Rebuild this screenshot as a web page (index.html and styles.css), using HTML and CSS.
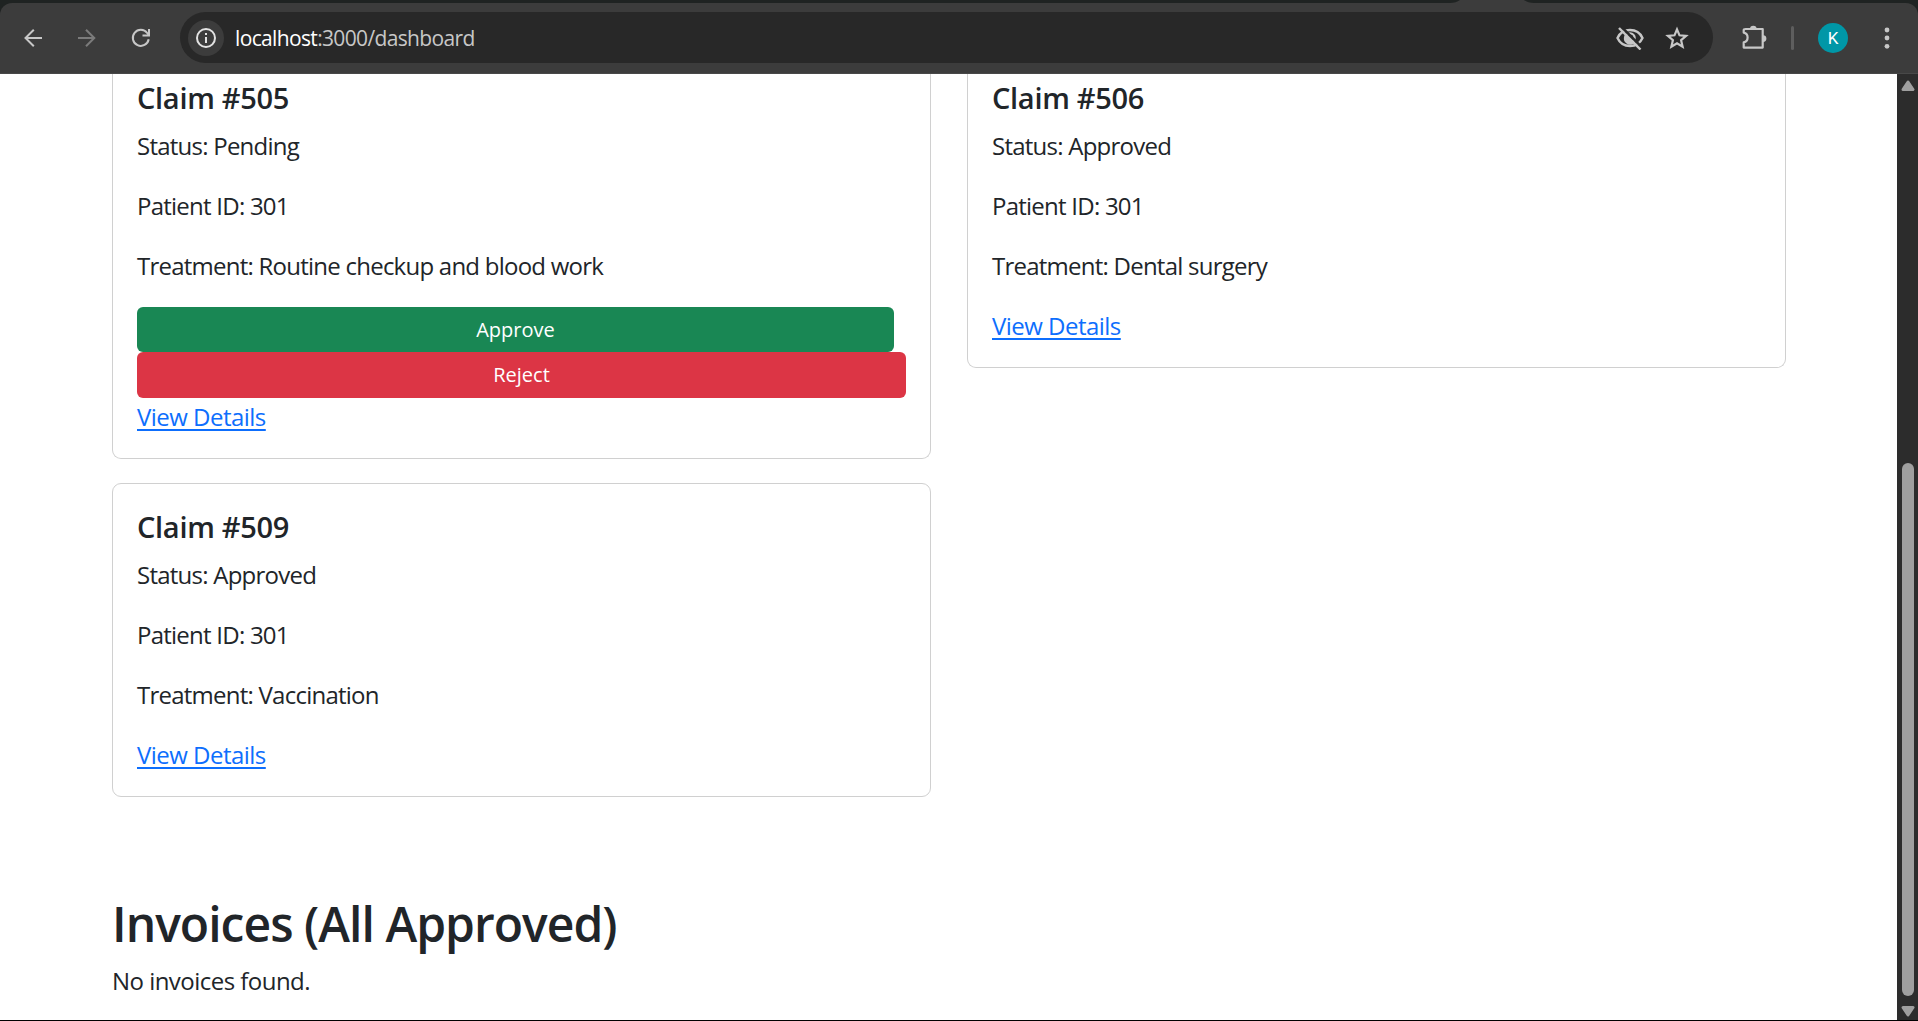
FILE: index.html
```html
<!DOCTYPE html>
<html lang="en">
<head>
<meta charset="utf-8">
<title>Dashboard</title>
<link rel="stylesheet" href="styles.css">
</head>
<body>
<div class="browser">
  <div class="tabstrip"><svg class="tab-foot" width="84" height="3" viewBox="0 0 84 3"><path d="M0 3Q6 3 10 0H74Q78 3 84 3Z" fill="#3c3c3c"/></svg></div>
  <header class="toolbar">
    <nav class="nav-icons">
      <svg width="20" height="20" viewBox="0 0 20 20" fill="none" stroke="#c7c7c7" stroke-width="2"><path d="M19 10H3M10.800 1.700L2.500 10l8.300 8.300"/></svg>
      <svg width="20" height="20" viewBox="0 0 20 20" fill="none" stroke="#7b7b7b" stroke-width="2"><path d="M1 10h15.800M9 1.700l8.300 8.300L9 18.300"/></svg>
      <svg width="20" height="20" viewBox="0 0 20 20" fill="none" stroke="#c7c7c7" stroke-width="2"><path d="M17.700 11.300A8 8 0 1 1 16.200 5L18 7.500"/><path d="M18 1v6.500h-6.500"/></svg>
    </nav>
    <div class="omnibox">
      <span class="site-info"><svg width="20" height="20" viewBox="0 0 20 20"><circle cx="10" cy="10" r="9" fill="none" stroke="#e3e3e3" stroke-width="2"/><path d="M9 9h2v6H9zM9 5h2v2H9z" fill="#e3e3e3"/></svg></span>
      <span class="url"><span class="host">localhost</span>:3000/dashboard</span>
      <svg class="eye" width="28" height="24" viewBox="0 0 28 24" fill="none" stroke="#c7c7c7" stroke-width="2.400"><path d="M1.500 12C4 6.500 8.500 4 14 4s10 2.500 12.500 8C24 17.500 19.500 20 14 20S4 17.500 1.500 12Z"/><circle cx="14" cy="12" r="4.600"/><path d="M9.500 10.500L17 16.500A5 5 0 0 1 9.500 10.500Z" fill="#c7c7c7"/><path d="M5.500 1L26 21.500" stroke="#282828" stroke-width="2.500"/><path d="M3 2L24.500 23.500"/></svg>
      <svg class="star" width="24" height="24" viewBox="0 0 24 24" fill="none" stroke="#c7c7c7" stroke-width="2.200"><path d="M12 3.300l2.500 6 6.600.6-5 4.300 1.500 6.500L12 17.200l-5.600 3.500 1.500-6.500-5-4.300 6.600-.6z"/></svg>
    </div>
    <svg class="puzzle" width="26" height="26" viewBox="0 0 26 26"><path d="M3.700 4h17v18.600h-19v-5.200c5.200-1 5.200-8.800 0-9.800V5q0-1 2-1Z" fill="none" stroke="#c7c7c7" stroke-width="2.200" stroke-linejoin="round"/><path d="M8 4a3.300 3.300 0 0 1 6.600 0ZM21 10.200a3.300 3.300 0 0 1 0 6.800Z" fill="#c7c7c7"/></svg>
    <span class="divider"></span>
    <span class="avatar">K</span>
    <svg class="dots" width="6" height="22" viewBox="0 0 6 22" fill="#c7c7c7"><circle cx="3" cy="3" r="2.400"/><circle cx="3" cy="11" r="2.400"/><circle cx="3" cy="19.300" r="2.400"/></svg>
  </header>
  <div class="viewport">
    <main class="page">
      <section class="claims">
        <article class="card card-clipped">
          <h5>Claim #505</h5>
          <p>Status: Pending</p>
          <p>Patient ID: 301</p>
          <p>Treatment: Routine checkup and blood work</p>
          <button class="btn btn-success">Approve</button>
          <button class="btn btn-danger">Reject</button>
          <a href="#">View Details</a>
        </article>
        <article class="card card-clipped">
          <h5>Claim #506</h5>
          <p>Status: Approved</p>
          <p>Patient ID: 301</p>
          <p>Treatment: Dental surgery</p>
          <a href="#">View Details</a>
        </article>
        <article class="card">
          <h5>Claim #509</h5>
          <p>Status: Approved</p>
          <p>Patient ID: 301</p>
          <p>Treatment: Vaccination</p>
          <a href="#">View Details</a>
        </article>
      </section>
      <section class="invoices">
        <h2>Invoices (All Approved)</h2>
        <p>No invoices found.</p>
      </section>
    </main>
    <aside class="scrollbar">
      <svg width="14" height="12" viewBox="0 0 14 12"><path d="M7 2L12 9.500H2Z" fill="#9f9f9f" stroke="#9f9f9f" stroke-width="3" stroke-linejoin="round"/></svg>
      <span class="track"><span class="thumb"></span></span>
      <svg width="14" height="12" viewBox="0 0 14 12"><path d="M7 10L12 2.500H2Z" fill="#9f9f9f" stroke="#9f9f9f" stroke-width="3" stroke-linejoin="round"/></svg>
    </aside>
  </div>
</div>
</body>
</html>
```
FILE: styles.css
```css
* { box-sizing: border-box; }
body {
  margin: 0;
  background: #fff;
  color: #212529;
  font: 24px/36px "Open Sans", "Noto Sans", sans-serif;
}
h2, h5, p { margin: 0; }
.browser {
  display: flex;
  flex-direction: column;
  height: 1021px;
  overflow: hidden;
  border-bottom: 1px solid #000;
  background: #1f2322;
}
.tabstrip { display: flex; height: 3px; padding-left: 1450px; }
.toolbar {
  display: flex;
  align-items: center;
  height: 71px;
  padding: 0 28px 1px 23px;
  background: #3c3c3c;
  border-bottom: 1px solid #484848;
  border-radius: 12px 12px 0 0;
}
.nav-icons { display: flex; gap: 34px; width: 157px; }
.omnibox {
  display: flex;
  align-items: center;
  flex: none;
  width: 1533px;
  height: 51px;
  padding: 0 24px 0 8px;
  border-radius: 26px;
  background: #282828;
}
.site-info {
  display: flex;
  align-items: center;
  justify-content: center;
  width: 36px;
  height: 36px;
  border-radius: 50%;
  background: #3c3c3c;
}
.url { flex: 1; margin-left: 11px; font-size: 21px; letter-spacing: -0.65px; color: #c7c7c7; }
.host { color: #fff; }
.star { margin-left: 21px; }
.puzzle { margin-left: 29px; }
.divider { width: 3px; height: 24px; margin-left: 23px; border-radius: 2px; background: #5e5e5e; }
.avatar {
  width: 30px;
  height: 30px;
  margin-left: 24px;
  border-radius: 50%;
  background: #0097a7;
  color: #fff;
  font: 17px/30px Roboto, sans-serif;
  text-align: center;
}
.dots { margin-left: auto; }
.viewport { display: flex; flex: 1; min-height: 0; }
.page { flex: 1; padding: 0 111px 0 112px; background: #fff; }
.claims {
  display: grid;
  grid-template-columns: 819px 819px;
  column-gap: 36px;
  row-gap: 24px;
  align-items: start;
}
.card {
  padding: 25px 24px 23px;
  border: 1px solid #d0d0d0;
  border-radius: 9px;
}
.card-clipped { padding-top: 6px; border-top: 0; border-radius: 0 0 9px 9px; }
.card h5 { margin-bottom: 12px; font-size: 29px; line-height: 36px; font-weight: 600; letter-spacing: -0.3px; }
.card p { margin-bottom: 24px; letter-spacing: -0.76px; }
.card a { display: block; width: fit-content; letter-spacing: -0.52px; color: #0d6efd; text-underline-offset: 3px; }
.btn {
  display: block;
  border: 0;
  border-radius: 6px;
  color: #fff;
  font: 20px/30px "Open Sans", sans-serif;
}
.btn-success { width: 757px; height: 45px; background: #198754; margin-top: -1px; }
.btn-danger { width: 769px; height: 46px; background: #dc3545; }
.card .btn-danger + a { margin-top: 1px; }
.invoices { padding-top: 98px; }
.invoices h2 { margin-bottom: 10px; font-size: 48px; line-height: 58px; font-weight: 600; letter-spacing: -0.97px; }
.invoices p { letter-spacing: -0.53px; }
.scrollbar {
  display: flex;
  flex-direction: column;
  align-items: center;
  width: 21px;
  padding: 6px 1px 3px 2px;
  background: #2c2c2c;
}
.track { display: flex; flex: 1; padding: 371px 0 9px; }
.thumb { width: 12px; border-radius: 6px; background: #9f9f9f; }
```
